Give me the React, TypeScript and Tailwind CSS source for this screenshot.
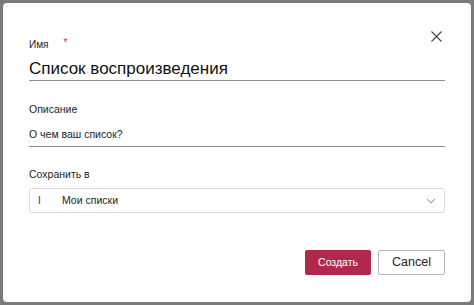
import React from "react";

export default function App() {
  return (
    <div className="w-[474px] h-[305px] bg-[#7a7a7a] p-[3px]" style={{ fontFamily: '"Liberation Sans", Arial, sans-serif' }}>
      <div className="relative w-full h-full bg-white rounded-[4px] pl-[26px] pr-[26px] pt-[35px] flex flex-col">
        <button className="absolute right-[28px] top-[26px] w-[14px] h-[14px] flex items-center justify-center text-[#444]">
          <svg width="11" height="11" viewBox="0 0 11 11" fill="none" stroke="currentColor" strokeWidth="1.1">
            <path d="M0.5 0.5 L10.5 10.5 M10.5 0.5 L0.5 10.5" />
          </svg>
        </button>
        <div className="flex items-start gap-[15px] text-[10px] leading-[13px] text-[#242424]">
          <span>Имя</span>
          <span className="text-[#c4314b] text-[10px] leading-[10px]">*</span>
        </div>
        <div className="mt-[8px] border-b border-[#8a8a8a] pb-[1px]">
          <div className="text-[17px] leading-[20px] text-[#111]">Список воспроизведения</div>
        </div>
        <div className="mt-[21px] text-[10.5px] leading-[14px] text-[#242424]">Описание</div>
        <div className="mt-[11px] border-b border-[#8a8a8a] pb-[5px] text-[10.5px] leading-[14px] text-[#242424]">
          О чем ваш список?
        </div>
        <div className="mt-[20px] text-[10.5px] leading-[14px] text-[#242424]">Сохранить в</div>
        <div className="mt-[7px] h-[25px] border border-[#dcdcdc] rounded-[3px] flex items-center pl-[8px] pr-[8px] text-[10.5px] text-[#242424]">
          <span className="w-[24px] text-[10px] text-[#333]">I</span>
          <span className="flex-1">Мои списки</span>
          <svg width="10" height="6" viewBox="0 0 10 6" fill="none" stroke="#888" strokeWidth="1">
            <path d="M1 1 L5 5 L9 1" />
          </svg>
        </div>
        <div className="mt-auto mb-[27px] flex justify-end gap-[7px]">
          <button className="w-[66px] h-[25px] bg-[#b0284c] rounded-[2px] text-white text-[10.5px]">Создать</button>
          <button className="w-[67px] h-[25px] bg-white border border-[#b8b8b8] rounded-[2px] text-[#242424] text-[12.5px]">Cancel</button>
        </div>
      </div>
    </div>
  );
}
